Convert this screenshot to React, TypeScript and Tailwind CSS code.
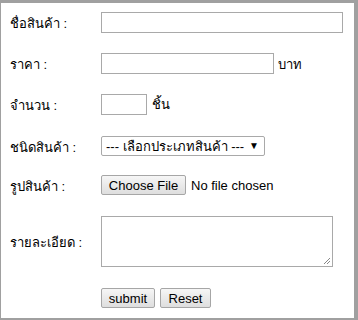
const label = "text-[13px] text-black leading-none";
const box = "border border-[#a9a9a9] bg-white h-[21px]";
const btn =
  "h-[20px] px-[6px] border border-[#a6a6a6] rounded-[2px] bg-gradient-to-b from-[#f6f6f6] to-[#dedede] text-[13px] leading-none text-black";

export default function App() {
  return (
    <div className="w-[358px] h-[320px] bg-white border-t-[3px] border-l border-r-4 border-b-2 border-[#a0a0a0] font-['Tahoma','Liberation_Sans','Noto_Sans',sans-serif]">
      <div className="flex flex-col pt-[9px] pl-[9px]">
        {/* ชื่อสินค้า */}
        <div className="flex items-center h-[21px]">
          <span className={`${label} w-[91px] pt-[2px]`}>ชื่อสินค้า :</span>
          <input className={`${box} w-[242px]`} />
        </div>

        {/* ราคา */}
        <div className="flex items-center h-[21px] mt-[20px]">
          <span className={`${label} w-[91px] pt-[2px]`}>ราคา :</span>
          <input className={`${box} w-[173px]`} />
          <span className={`${label} ml-[4px] pt-[2px]`}>บาท</span>
        </div>

        {/* จำนวน */}
        <div className="flex items-center h-[21px] mt-[20px]">
          <span className={`${label} w-[91px] pt-[2px]`}>จำนวน :</span>
          <input className={`${box} w-[46px]`} />
          <span className={`${label} ml-[5px]`}>ชิ้น</span>
        </div>

        {/* ชนิดสินค้า */}
        <div className="flex items-center h-[20px] mt-[21px]">
          <span className={`${label} w-[91px] pt-[2px]`}>ชนิดสินค้า :</span>
          <div className="flex items-center justify-between w-[164px] h-[20px] border border-[#a9a9a9] rounded-[2px] bg-white pl-[4px] pr-[5px]">
            <span className="text-[13px] leading-none text-black">--- เลือกประเภทสินค้า ---</span>
            <span className="text-[10px] leading-none text-black">▼</span>
          </div>
        </div>

        {/* รูปสินค้า */}
        <div className="flex items-center h-[20px] mt-[19px]">
          <span className={`${label} w-[91px] pt-[2px]`}>รูปสินค้า :</span>
          <button className={`${btn} w-[85px] font-['Liberation_Sans',sans-serif]`}>Choose File</button>
          <span className="ml-[5px] text-[13px] leading-none text-black font-['Liberation_Sans',sans-serif]">
            No file chosen
          </span>
        </div>

        {/* รายละเอียด */}
        <div className="flex items-center h-[51px] mt-[21px]">
          <span className={`${label} w-[91px] pt-[2px]`}>รายละเอียด :</span>
          <div className="relative w-[232px] h-[51px] border border-[#a9a9a9] bg-white">
            <svg className="absolute right-[1px] bottom-[1px]" width="8" height="8" viewBox="0 0 8 8">
              <path d="M7 1L1 7M7 4L4 7" stroke="#888" strokeWidth="1" />
            </svg>
          </div>
        </div>

        {/* buttons */}
        <div className="flex items-center h-[20px] mt-[21px] pl-[91px] gap-[5px]">
          <button className={`${btn} w-[54px] font-['Liberation_Sans',sans-serif]`}>submit</button>
          <button className={`${btn} w-[51px] font-['Liberation_Sans',sans-serif]`}>Reset</button>
        </div>
      </div>
    </div>
  );
}
